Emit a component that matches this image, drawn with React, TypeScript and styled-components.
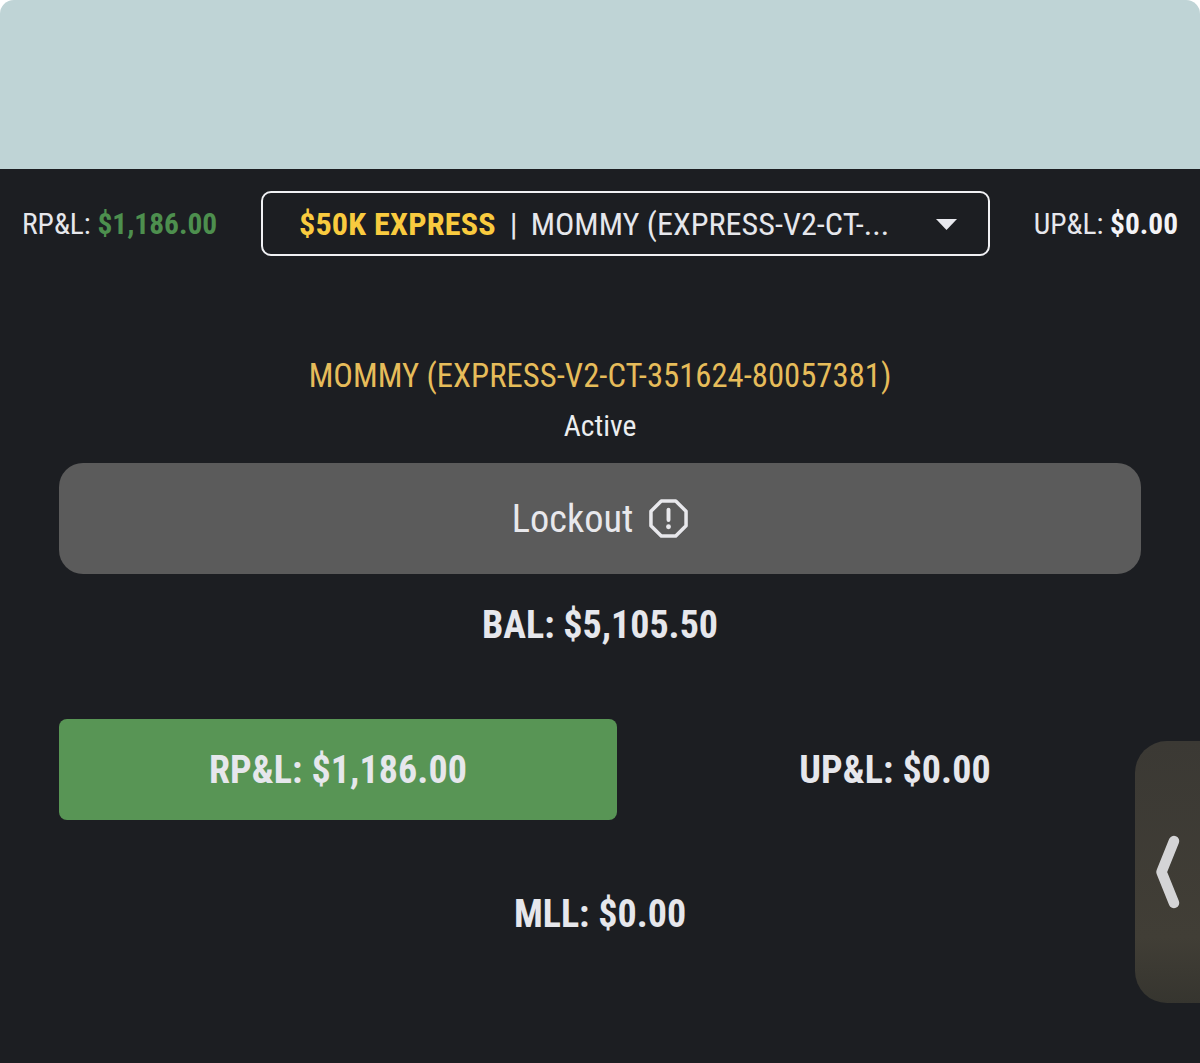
import React from 'react'
import styled, { createGlobalStyle } from 'styled-components'

const GlobalStyle = createGlobalStyle`
  html, body {
    margin: 0;
    padding: 0;
    background: #1c1e22;
  }
  * {
    box-sizing: border-box;
  }
`

const SPage = styled.div`
  position: relative;
  width: 1200px;
  height: 1063px;
  overflow: hidden;
  background: #1c1e22;
  color: #e6e7ec;
  font-family: "Roboto Condensed", Roboto, "Liberation Sans", sans-serif;
  font-stretch: 75%;
`

const SBanner = styled.div`
  height: 169px;
  background: #bfd4d6;
  border-radius: 14px 14px 0 0;
`

const SBannerWrap = styled.div`
  background: #ffffff;
`

const STopBar = styled.div`
  display: flex;
  align-items: center;
  justify-content: space-between;
  padding: 22px 22px 0;
`

const SStat = styled.div`
  height: 65px;
  font-size: 29.4px;
  line-height: 67px;
  white-space: nowrap;
`

const SStatValue = styled.span<{ $color?: string }>`
  font-weight: 700;
  color: ${({ $color }) => $color || '#f3f3f6'};
`

const SSelect = styled.div`
  display: flex;
  align-items: center;
  width: 729px;
  height: 65px;
  padding: 0 31px 0 36px;
  border: 2.5px solid #f0f1f4;
  border-radius: 10px;
  font-size: 32.2px;
  white-space: nowrap;
`

const SPlan = styled.span`
  font-weight: 700;
  letter-spacing: 0.2px;
  color: #f9cb3f;
`

const SDivider = styled.span`
  margin: 0 13px 0 14px;
`

const SCaret = styled.svg`
  margin-left: auto;
`

const SBody = styled.div`
  display: flex;
  flex-direction: column;
  padding: 0 59px;
`

const SAccount = styled.div`
  margin-top: 101px;
  font-size: 32.7px;
  line-height: 38px;
  color: #e6bc5a;
  text-align: center;
`

const SStatus = styled.div`
  margin-top: 14px;
  font-size: 29.6px;
  line-height: 34px;
  color: #eceef0;
  text-align: center;
`

const SLockout = styled.div`
  display: flex;
  align-items: center;
  justify-content: center;
  gap: 16px;
  height: 111px;
  margin-top: 20px;
  background: #5b5b5b;
  border-radius: 24px;
  font-size: 38.3px;
  color: #e8e8ec;
`

const SBalance = styled.div`
  margin-top: 29px;
  font-size: 38px;
  line-height: 44px;
  font-weight: 700;
  text-align: center;
`

const SPnlRow = styled.div`
  display: flex;
  align-items: center;
  margin-top: 72px;
`

const SPnlCell = styled.div<{ $active?: boolean }>`
  display: flex;
  flex-shrink: 0;
  align-items: center;
  justify-content: center;
  width: ${({ $active }) => ($active ? '558px' : '556px')};
  height: 101px;
  border-radius: 8px;
  font-size: 38px;
  font-weight: 700;
  letter-spacing: 0.1px;
  background: ${({ $active }) => ($active ? '#589555' : 'transparent')};
`

const SMll = styled.div`
  margin-top: 72px;
  font-size: 38px;
  line-height: 44px;
  font-weight: 700;
  text-align: center;
`

const SSideTab = styled.div`
  position: absolute;
  top: 741px;
  right: 0;
  display: flex;
  align-items: center;
  width: 65px;
  height: 262px;
  padding-left: 18px;
  border-radius: 32px 0 0 32px;
  background: linear-gradient(180deg, #3b3934 0%, #413e36 75%, #36352f 100%);
`

const App = () => {
  return (
    <>
      <GlobalStyle />
      <SPage>
        <SBannerWrap>
          <SBanner />
        </SBannerWrap>

        <STopBar>
          <SStat>
            RP&amp;L: <SStatValue $color="#4d8f4e">$1,186.00</SStatValue>
          </SStat>
          <SSelect>
            <SPlan>$50K EXPRESS</SPlan>
            <SDivider>|</SDivider>
            <span>MOMMY (EXPRESS-V2-CT-...</span>
            <SCaret width="21" height="12" viewBox="0 0 21 12">
              <path d="M0 1h21L10.5 12z" fill="#e8e9ee" />
            </SCaret>
          </SSelect>
          <SStat>
            UP&amp;L: <SStatValue>$0.00</SStatValue>
          </SStat>
        </STopBar>

        <SBody>
          <SAccount>MOMMY (EXPRESS-V2-CT-351624-80057381)</SAccount>
          <SStatus>Active</SStatus>
          <SLockout>
            Lockout
            <svg width="39" height="39" viewBox="0 0 40 40" fill="none">
              <path
                d="M12.6 2h14.8L38 12.6v14.8L27.4 38H12.6L2 27.4V12.6z"
                stroke="#e8e8ec"
                strokeWidth="3.6"
                strokeLinejoin="round"
              />
              <path d="M20 11v10.5" stroke="#e8e8ec" strokeWidth="4" strokeLinecap="round" />
              <circle cx="20" cy="28.5" r="2.5" fill="#e8e8ec" />
            </svg>
          </SLockout>
          <SBalance>BAL: $5,105.50</SBalance>
          <SPnlRow>
            <SPnlCell $active>RP&amp;L: $1,186.00</SPnlCell>
            <SPnlCell>UP&amp;L: $0.00</SPnlCell>
          </SPnlRow>
          <SMll>MLL: $0.00</SMll>
        </SBody>

        <SSideTab>
          <svg width="30" height="78" viewBox="0 0 30 78" fill="none">
            <path
              d="M21 8L8.5 39 21 70"
              stroke="#d4d4d6"
              strokeWidth="10.5"
              strokeLinecap="round"
              strokeLinejoin="round"
            />
          </svg>
        </SSideTab>
      </SPage>
    </>
  )
}

export default App
